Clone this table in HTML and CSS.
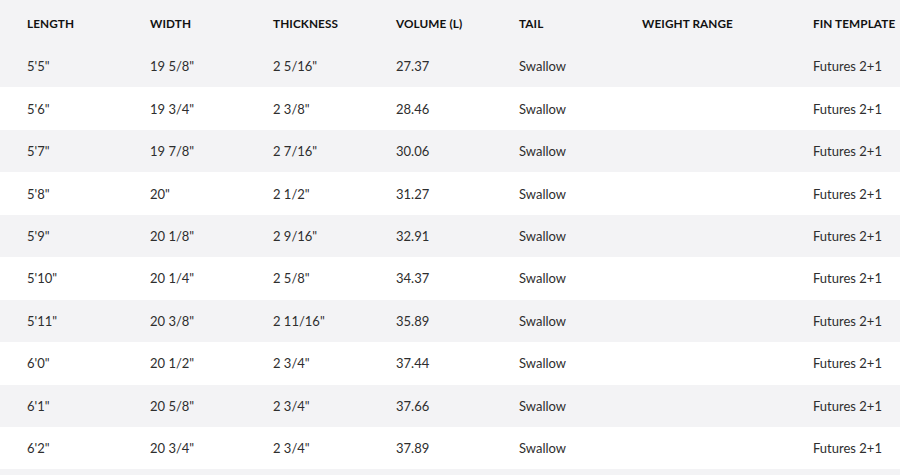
FILE: index.html
```html
<!DOCTYPE html>
<html lang="en">
<head>
<meta charset="utf-8">
<title>Board dimensions</title>
<link rel="stylesheet" href="styles.css">
</head>
<body>
<table class="specs">
  <colgroup>
    <col class="c-std"><col class="c-std"><col class="c-std"><col class="c-std"><col class="c-std"><col class="c-wide"><col class="c-last">
  </colgroup>
  <thead>
    <tr><th>Length</th><th>Width</th><th>Thickness</th><th>Volume (L)</th><th>Tail</th><th>Weight Range</th><th>Fin Template</th></tr>
  </thead>
  <tbody>
    <tr><td>5'5"</td><td>19 5/8"</td><td>2 5/16"</td><td>27.37</td><td>Swallow</td><td></td><td>Futures 2+1</td></tr>
    <tr><td>5'6"</td><td>19 3/4"</td><td>2 3/8"</td><td>28.46</td><td>Swallow</td><td></td><td>Futures 2+1</td></tr>
    <tr><td>5'7"</td><td>19 7/8"</td><td>2 7/16"</td><td>30.06</td><td>Swallow</td><td></td><td>Futures 2+1</td></tr>
    <tr><td>5'8"</td><td>20"</td><td>2 1/2"</td><td>31.27</td><td>Swallow</td><td></td><td>Futures 2+1</td></tr>
    <tr><td>5'9"</td><td>20 1/8"</td><td>2 9/16"</td><td>32.91</td><td>Swallow</td><td></td><td>Futures 2+1</td></tr>
    <tr><td>5'10"</td><td>20 1/4"</td><td>2 5/8"</td><td>34.37</td><td>Swallow</td><td></td><td>Futures 2+1</td></tr>
    <tr><td>5'11"</td><td>20 3/8"</td><td>2 11/16"</td><td>35.89</td><td>Swallow</td><td></td><td>Futures 2+1</td></tr>
    <tr><td>6'0"</td><td>20 1/2"</td><td>2 3/4"</td><td>37.44</td><td>Swallow</td><td></td><td>Futures 2+1</td></tr>
    <tr><td>6'1"</td><td>20 5/8"</td><td>2 3/4"</td><td>37.66</td><td>Swallow</td><td></td><td>Futures 2+1</td></tr>
    <tr><td>6'2"</td><td>20 3/4"</td><td>2 3/4"</td><td>37.89</td><td>Swallow</td><td></td><td>Futures 2+1</td></tr>
    <tr class="cut"><td></td><td></td><td></td><td></td><td></td><td></td><td></td></tr>
  </tbody>
</table>
</body>
</html>
```
FILE: styles.css
```css
html, body {
  margin: 0;
  padding: 0;
  background: #ffffff;
  overflow: hidden;
}

.specs {
  border-collapse: collapse;
  border-spacing: 0;
  table-layout: fixed;
  width: 900px;
  font-family: Lato, "Liberation Sans", Arial, sans-serif;
  color: #2e2e2e;
}

.c-std { width: 123px; }
.c-wide { width: 171px; }
.c-last { width: 114px; }

.specs th,
.specs td {
  padding: 0 0 0 27px;
  text-align: left;
  vertical-align: middle;
  white-space: nowrap;
  overflow: visible;
}

.specs thead tr {
  background: #f3f3f5;
}

.specs th {
  height: 43px;
  padding-top: 2px;
  font-size: 11.75px;
  font-weight: 700;
  text-transform: uppercase;
  color: #111111;
  letter-spacing: 0.1px;
}

.specs td {
  height: 42.44px;
  font-size: 13px;
  font-weight: 400;
}

.specs tbody tr:nth-child(odd) {
  background: #f3f3f5;
}

.specs tbody tr:nth-child(even) {
  background: #ffffff;
}
```
